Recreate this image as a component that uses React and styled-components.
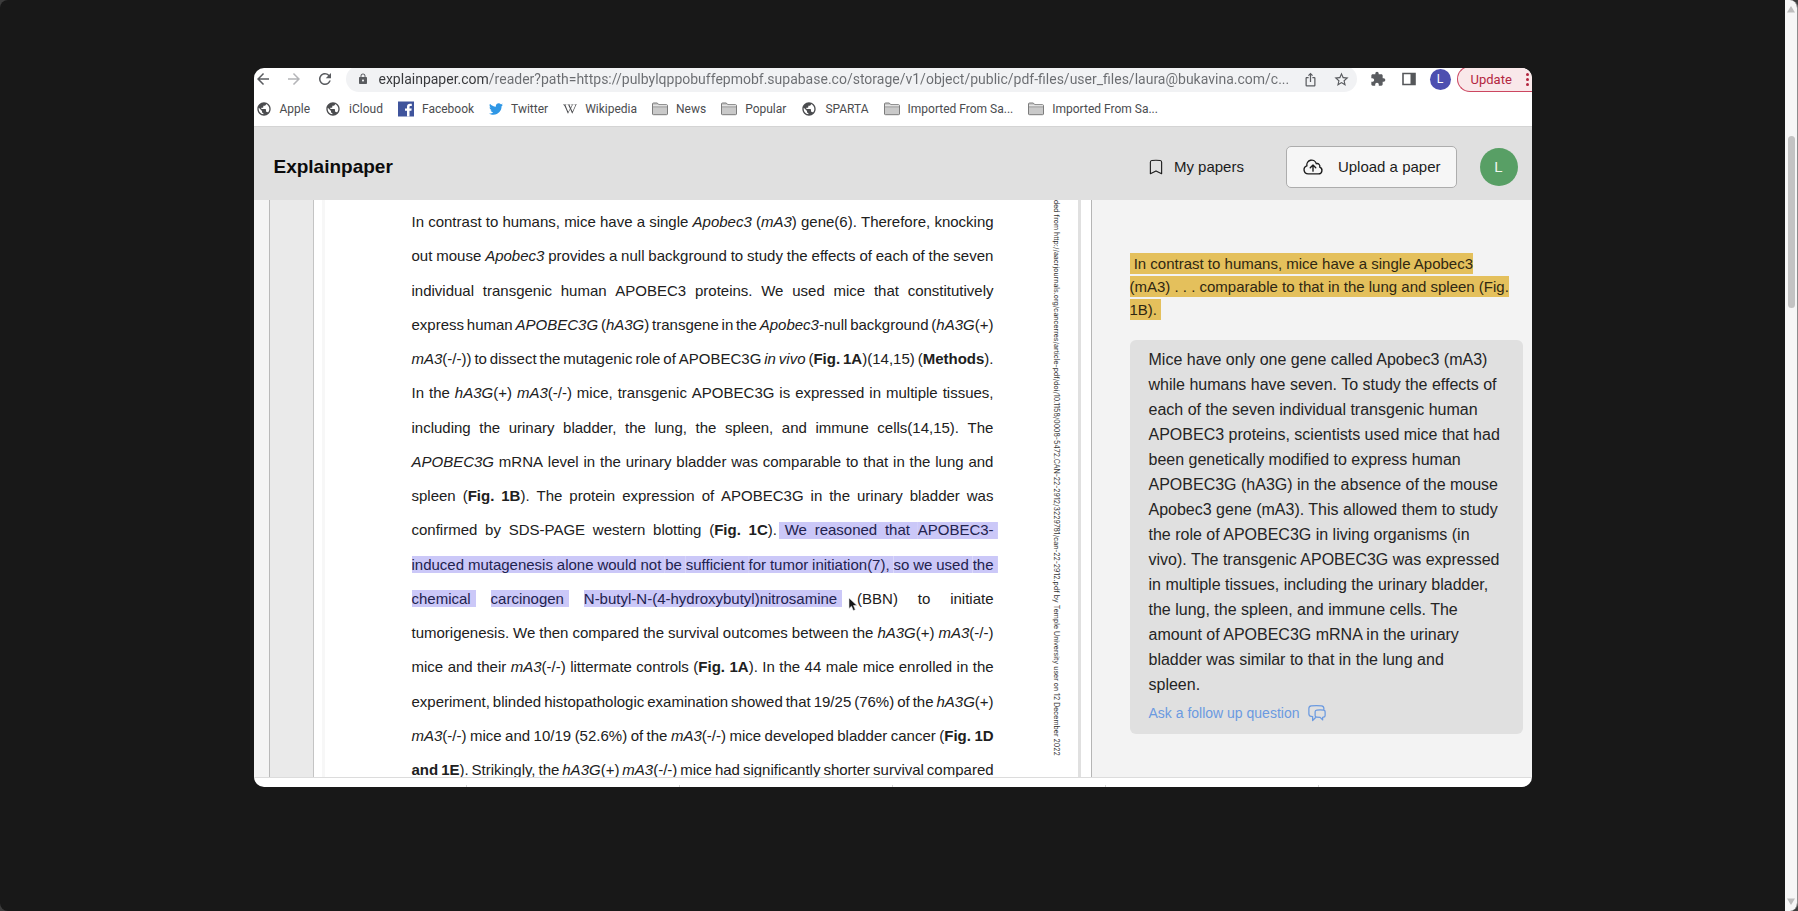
import styled, { createGlobalStyle, css } from "styled-components";
import {
  MdArrowBack,
  MdArrowForward,
  MdRefresh,
  MdLock,
  MdIosShare,
  MdStarBorder,
  MdExtension,
  MdPublic,
} from "react-icons/md";
import { FaTwitter, FaWikipediaW } from "react-icons/fa";
import {
  HiOutlineBookmark,
  HiOutlineCloudArrowUp,
  HiOutlineChatBubbleLeftRight,
} from "react-icons/hi2";

const GlobalStyle = createGlobalStyle`
  * {
    box-sizing: border-box;
  }

  body {
    margin: 0;
    background: #3c3c3c;
    font-family: "Liberation Sans", Arial, sans-serif;
  }

  button,
  input {
    font: inherit;
  }
`;

const Page = styled.div`
  display: flex;
  height: 100vh;
  overflow: hidden;
  background: #181818;
  border-right: 1px solid #8c8c8c;
  border-radius: 8px;
`;

const Stage = styled.main`
  flex: 1;
  min-width: 0;
  display: flex;
  justify-content: center;
  padding: 68px 24px 124px;
`;

const ScrollTrack = styled.div`
  width: 12px;
  display: flex;
  flex-direction: column;
  align-items: center;
  justify-content: space-between;
  padding: 6px 0;
  background: #f6f6f6;
`;

const ScrollRail = styled.div`
  flex: 1;
  padding-top: 123px;
`;

const ScrollThumb = styled.div`
  width: 7px;
  height: 172px;
  border-radius: 4px;
  background: #c3c3c3;
`;

const Window = styled.section`
  width: 100%;
  max-width: 1278px;
  display: flex;
  flex-direction: column;
  overflow: hidden;
  border-radius: 10px;
  background: #fff;
`;

const Toolbar = styled.div`
  flex: none;
  display: flex;
  align-items: flex-end;
  height: 24px;
  color: #5a5c60;
`;

const IconButton = styled.button`
  display: flex;
  align-items: center;
  justify-content: center;
  flex: none;
  width: ${(props) => props.$width || 31}px;
  height: 26px;
  padding: 0;
  border: none;
  background: none;
  color: ${(props) => (props.$muted ? "#b4b5b8" : "inherit")};
  cursor: pointer;
`;

const NavButtons = styled.div`
  display: flex;
  gap: 13px;
  padding-right: 12px;
`;

const AddressBar = styled.label`
  flex: 1;
  min-width: 0;
  display: flex;
  align-items: center;
  height: 26px;
  padding-left: 11px;
  border-radius: 13px;
  background: #f1f2f4;
`;

const AddressInput = styled.input`
  flex: 1;
  min-width: 0;
  margin-left: 10px;
  padding: 0;
  border: none;
  outline: none;
  font-family: Roboto, sans-serif;
  font-size: 14px;
  line-height: 20px;
  color: transparent;
  background: linear-gradient(90deg, #36373a 110px, #6a6c70 110px);
  background-clip: text;
`;

const Extensions = styled.div`
  display: flex;
  padding: 0 1px 0 6px;
`;

const ProfileBadge = styled.span`
  display: flex;
  align-items: center;
  justify-content: center;
  width: 21px;
  height: 21px;
  border-radius: 50%;
  background: #4d4fb0;
  color: #fff;
  font-size: 12px;
`;

const UpdateButton = styled.button`
  flex: none;
  display: flex;
  align-items: center;
  gap: 14px;
  width: 75px;
  height: 26px;
  padding: 0 0 0 13px;
  border: 1px solid #cc4660;
  border-right: none;
  border-radius: 13px 0 0 13px;
  background: #f9e8ea;
  color: #b3263f;
  font-family: Roboto, sans-serif;
  font-size: 13px;
`;

const Bookmarks = styled.nav`
  flex: none;
  display: flex;
  align-items: center;
  gap: 15px;
  height: 35px;
  padding-left: 2px;
  border-bottom: 1px solid #d4d4d4;
`;

const BookmarkLink = styled.a`
  display: flex;
  align-items: center;
  gap: 8px;
  color: #4b4c4f;
  font-family: Roboto, sans-serif;
  font-size: 12px;
  line-height: 16px;
  white-space: nowrap;
  text-decoration: none;
`;

const Header = styled.header`
  flex: none;
  display: flex;
  align-items: center;
  height: 73px;
  padding: 6px 14px 0 20px;
  background: #e0e0e0;
`;

const Brand = styled.h1`
  flex: 1;
  margin: 0;
  font-size: 19px;
  line-height: 24px;
  color: #0c0c0c;
`;

const PapersLink = styled.a`
  display: flex;
  align-items: center;
  gap: 9px;
  margin-right: 42px;
  color: #1c1c1c;
  font-size: 15px;
  text-decoration: none;
`;

const UploadButton = styled.button`
  display: flex;
  align-items: center;
  gap: 14px;
  height: 42px;
  margin-right: 23px;
  padding: 0 15px;
  border: 1px solid #adadad;
  border-radius: 5px;
  background: #f6f6f6;
  color: #1c1c1c;
  font-size: 15px;
  cursor: pointer;
`;

const Avatar = styled.button`
  width: 38px;
  height: 38px;
  padding: 0;
  border: none;
  border-radius: 50%;
  background: #589f65;
  color: #f2f7f2;
  font-size: 15px;
`;

const Reader = styled.div`
  flex: 1;
  min-height: 0;
  display: flex;
  overflow: hidden;
`;

const Gutter = styled.div`
  flex: none;
  width: 16px;
  background: #f4f4f4;
  border-right: 1px solid #b9b9b9;
`;

const Margin = styled.div`
  flex: none;
  width: 44px;
  background: #eaeaea;
  border-right: 1px solid #c4c4c4;
`;

const Paper = styled.article`
  flex: 1;
  min-width: 0;
  display: flex;
  align-items: flex-start;
  margin-left: 8px;
  border-left: 3px solid #f7f7f7;
  border-right: 3px solid #e0e0e0;
`;

const PaperText = styled.div`
  flex: 1;
  min-width: 0;
  display: flex;
  flex-direction: column;
  justify-content: space-between;
  height: 582px;
  margin: 5px 58px 0 87px;
  color: #202020;
  font-size: 15px;
  line-height: 34px;
`;

const Line = styled.div`
  display: flex;
  white-space: nowrap;
`;

// Spare width goes to every word but the last, which justifies the line.
const Word = styled.span`
  position: relative;
  flex: 1 0 auto;

  &:last-child {
    flex-grow: 0;
  }

  ${(props) =>
    props.$marked &&
    css`
      background: linear-gradient(#cbc8f8, #cbc8f8) center / 100% 17px no-repeat;
      color: #22224e;
    `}

  ${(props) =>
    props.$first &&
    css`
      margin-left: -6px;
      padding-left: 6px;
    `}

  ${(props) =>
    props.$marked &&
    css`
      &:last-child {
        margin-right: -4px;
        padding-right: 4px;
      }
    `}
`;

const Mark = styled.mark`
  margin-right: -5px;
  padding-right: 5px;
  background: #cbc8f8;
  color: #22224e;
`;

const Pointer = styled.svg`
  position: absolute;
  top: 15px;
  left: -9px;
`;

const SideNote = styled.p`
  flex: none;
  margin: 0 17px 0 0;
  writing-mode: vertical-rl;
  color: #333;
  font-family: Inter, sans-serif;
  font-size: 7px;
  line-height: 9px;
  white-space: nowrap;
`;

const Panel = styled.aside`
  flex: 0 0 441px;
  margin-left: 10px;
  padding: 52px 9px 0 38px;
  border-left: 1px solid #b5b5b5;
  background: #f3f3f3;
`;

const Quote = styled.p`
  margin: 0;
  color: #2f2712;
  font-size: 15px;
  line-height: 23px;
  white-space: nowrap;
`;

const QuoteLine = styled.span`
  display: table;
  height: 21px;
  margin: 1px 0 2px;
  background: #e4c05c;
  line-height: 21px;
`;

const Answer = styled.div`
  margin-top: 20px;
  padding: 7px 16px 9px 19px;
  border-radius: 6px;
  background: #e0e0e0;
`;

const AnswerText = styled.p`
  margin: 0;
  color: #242424;
  font-size: 16px;
  line-height: 25px;
`;

const AnswerLine = styled.span`
  display: block;
  white-space: nowrap;
`;

const FollowUp = styled.a`
  display: flex;
  align-items: center;
  gap: 8px;
  margin-top: 4px;
  color: #6b9ae0;
  font-size: 14px;
  line-height: 24px;
  text-decoration: none;
`;

const Strip = styled.footer`
  flex: none;
  display: flex;
  align-items: flex-end;
  height: 10px;
  border-top: 1px solid #dcdcdc;
`;

const Tick = styled.i`
  flex: 1;
  height: 2px;
  border-right: 1px solid #d8d8d8;

  &:last-child {
    border-right: none;
  }
`;

const Folder = () => (
  <svg width="16" height="14" viewBox="0 0 16 14" aria-hidden="true">
    <path
      d="M.5 12V2q0-1 1-1h3.8l1.6 1.7h7.6q1 0 1 1V12q0 .7-1 .7h-13q-1 0-1-.7z"
      fill="#c9c9c9"
      stroke="#7c7c7c"
    />
    <path d="M1 4.8h14" stroke="#8c8c8c" />
    <path d="M1 3.8h14" stroke="#efefef" />
  </svg>
);

const Facebook = () => (
  <svg width="16" height="16" viewBox="0 0 16 16" aria-hidden="true">
    <path d="M0 .5h16v15H0z" fill="#3f549c" />
    <path
      d="M9 15.5V9.8H7V7.4h2V5.8C9 3.8 10.1 2.7 12 2.7h1.8v2.3h-1.2c-.8 0-1.1.4-1.1 1.1v1.3h2.2l-.3 2.4h-1.9v5.7z"
      fill="#fff"
    />
  </svg>
);

const SidePanel = () => (
  <svg width="14" height="14" viewBox="0 0 14 14" aria-hidden="true">
    <path d="M1 1.5h12v11H1z" fill="none" stroke="#55575a" strokeWidth="1.6" />
    <path d="M8.5 1.5H13v11H8.5z" fill="#55575a" />
  </svg>
);

const Arrow = ({ down }) => (
  <svg width="8" height="7" viewBox="0 0 8 7" aria-hidden="true">
    <path d={down ? "M0 .5h8L4 7z" : "M0 6.5h8L4 0z"} fill="#bdbdbd" />
  </svg>
);

const bookmarks = [
  { label: "Apple", icon: <MdPublic size={16} /> },
  { label: "iCloud", icon: <MdPublic size={16} /> },
  { label: "Facebook", icon: <Facebook /> },
  { label: "Twitter", icon: <FaTwitter size={14} color="#2f97e5" /> },
  { label: "Wikipedia", icon: <FaWikipediaW size={14} /> },
  { label: "News", icon: <Folder /> },
  { label: "Popular", icon: <Folder /> },
  { label: "SPARTA", icon: <MdPublic size={16} /> },
  { label: "Imported From Sa...", icon: <Folder /> },
  { label: "Imported From Sa...", icon: <Folder /> },
];

// _word_ is italic, *word* is bold. `mark` is the range of selected words.
const paperLines = [
  { text: "In contrast to humans, mice have a single _Apobec3_ (_mA3_) gene(6). Therefore, knocking" },
  { text: "out mouse _Apobec3_ provides a null background to study the effects of each of the seven" },
  { text: "individual transgenic human APOBEC3 proteins. We used mice that constitutively" },
  { text: "express human _APOBEC3G_ (_hA3G_) transgene in the _Apobec3_-null background (_hA3G_(+)" },
  { text: "_mA3_(-/-)) to dissect the mutagenic role of APOBEC3G _in_ _vivo_ (*Fig.* *1A*)(14,15) (*Methods*)." },
  { text: "In the _hA3G_(+) _mA3_(-/-) mice, transgenic APOBEC3G is expressed in multiple tissues," },
  { text: "including the urinary bladder, the lung, the spleen, and immune cells(14,15). The" },
  { text: "_APOBEC3G_ mRNA level in the urinary bladder was comparable to that in the lung and" },
  { text: "spleen (*Fig.* *1B*). The protein expression of APOBEC3G in the urinary bladder was" },
  { text: "confirmed by SDS-PAGE western blotting (*Fig.* *1C*). We reasoned that APOBEC3-", mark: [7, 10] },
  { text: "induced mutagenesis alone would not be sufficient for tumor initiation(7), so we used the", mark: [0, 13] },
  { text: "chemical carcinogen N-butyl-N-(4-hydroxybutyl)nitrosamine (BBN) to initiate", mark: [0, 2], split: true, pointer: 3 },
  { text: "tumorigenesis. We then compared the survival outcomes between the _hA3G_(+) _mA3_(-/-)" },
  { text: "mice and their _mA3_(-/-) littermate controls (*Fig.* *1A*). In the 44 male mice enrolled in the" },
  { text: "experiment, blinded histopathologic examination showed that 19/25 (76%) of the _hA3G_(+)" },
  { text: "_mA3_(-/-) mice and 10/19 (52.6%) of the _mA3_(-/-) mice developed bladder cancer (*Fig.* *1D*" },
  { text: "*and* *1E*). Strikingly, the _hA3G_(+) _mA3_(-/-) mice had significantly shorter survival compared" },
];

const answerLines = [
  "Mice have only one gene called Apobec3 (mA3)",
  "while humans have seven. To study the effects of",
  "each of the seven individual transgenic human",
  "APOBEC3 proteins, scientists used mice that had",
  "been genetically modified to express human",
  "APOBEC3G (hA3G) in the absence of the mouse",
  "Apobec3 gene (mA3). This allowed them to study",
  "the role of APOBEC3G in living organisms (in",
  "vivo). The transgenic APOBEC3G was expressed",
  "in multiple tissues, including the urinary bladder,",
  "the lung, the spleen, and immune cells. The",
  "amount of APOBEC3G mRNA in the urinary",
  "bladder was similar to that in the lung and",
  "spleen.",
];

const format = (word) =>
  word.split(/(_[^_]+_|\*[^*]+\*)/).map((part, i) => {
    if (part[0] === "_") return <em key={i}>{part.slice(1, -1)}</em>;
    if (part[0] === "*") return <b key={i}>{part.slice(1, -1)}</b>;
    return part;
  });

const PaperLine = ({ text, mark, split, pointer }) => (
  <Line>
    {text.split(" ").map((word, i) => {
      const marked = Boolean(mark) && i >= mark[0] && i <= mark[1];
      return [
        i > 0 && " ",
        <Word
          key={i}
          $marked={marked && !split}
          $first={marked && i > 0 && i === mark[0]}
        >
          {marked && split ? <Mark>{word}</Mark> : format(word)}
          {pointer === i && (
            <Pointer width="10" height="15" viewBox="0 0 10 15" aria-hidden="true">
              <path
                d="M1 1v10.5l2.5-2.3 1.8 4.3 2-.8-1.8-4.2H9z"
                fill="#161616"
                stroke="#e8e8e8"
                strokeWidth=".6"
              />
            </Pointer>
          )}
        </Word>,
      ];
    })}
  </Line>
);

const App = () => {
  return (
    <>
      <GlobalStyle />
      <Page>
        <Stage>
          <Window>
            <Toolbar>
              <NavButtons>
                <IconButton $width={18} aria-label="Back">
                  <MdArrowBack size={18} />
                </IconButton>
                <IconButton $width={18} $muted aria-label="Forward">
                  <MdArrowForward size={18} />
                </IconButton>
                <IconButton $width={18} aria-label="Reload">
                  <MdRefresh size={18} />
                </IconButton>
              </NavButtons>
              <AddressBar>
                <MdLock size={12} />
                <AddressInput
                  aria-label="Address"
                  defaultValue="explainpaper.com/reader?path=https://pulbylqppobuffepmobf.supabase.co/storage/v1/object/public/pdf-files/user_files/laura@bukavina.com/c..."
                />
                <IconButton aria-label="Share">
                  <MdIosShare size={15} />
                </IconButton>
                <IconButton aria-label="Bookmark this page">
                  <MdStarBorder size={17} />
                </IconButton>
              </AddressBar>
              <Extensions>
                <IconButton aria-label="Extensions">
                  <MdExtension size={16} />
                </IconButton>
                <IconButton aria-label="Side panel">
                  <SidePanel />
                </IconButton>
                <IconButton aria-label="Profile">
                  <ProfileBadge>L</ProfileBadge>
                </IconButton>
              </Extensions>
              <UpdateButton>
                Update
                <svg width="3" height="13" viewBox="0 0 3 13" aria-hidden="true">
                  <circle cx="1.5" cy="1.5" r="1.5" fill="currentColor" />
                  <circle cx="1.5" cy="6.5" r="1.5" fill="currentColor" />
                  <circle cx="1.5" cy="11.5" r="1.5" fill="currentColor" />
                </svg>
              </UpdateButton>
            </Toolbar>
            <Bookmarks>
              {bookmarks.map((item, i) => (
                <BookmarkLink href="#" key={i}>
                  {item.icon}
                  {item.label}
                </BookmarkLink>
              ))}
            </Bookmarks>
            <Header>
              <Brand>Explainpaper</Brand>
              <PapersLink href="#">
                <HiOutlineBookmark size={18} />
                My papers
              </PapersLink>
              <UploadButton>
                <HiOutlineCloudArrowUp size={22} />
                Upload a paper
              </UploadButton>
              <Avatar>L</Avatar>
            </Header>
            <Reader>
              <Gutter />
              <Margin />
              <Paper>
                <PaperText>
                  {paperLines.map((line, i) => (
                    <PaperLine key={i} {...line} />
                  ))}
                </PaperText>
                <SideNote>
                  ded from
                  http://aacrjournals.org/cancerres/article-pdf/doi/10.1158/0008-5472.CAN-22-2912/3229781/can-22-2912.pdf
                  by Temple University user on 12 December 2022
                </SideNote>
              </Paper>
              <Panel>
                <Quote>
                  <QuoteLine>
                    &nbsp;In contrast to humans, mice have a single Apobec3
                  </QuoteLine>
                  <QuoteLine>
                    (mA3) . . . comparable to that in the lung and spleen (Fig.
                  </QuoteLine>
                  <QuoteLine>1B).&nbsp;</QuoteLine>
                </Quote>
                <Answer>
                  <AnswerText>
                    {answerLines.map((line) => (
                      <AnswerLine key={line}>{line} </AnswerLine>
                    ))}
                  </AnswerText>
                  <FollowUp href="#">
                    Ask a follow up question
                    <HiOutlineChatBubbleLeftRight size={20} />
                  </FollowUp>
                </Answer>
              </Panel>
            </Reader>
            <Strip>
              <Tick />
              <Tick />
              <Tick />
              <Tick />
              <Tick />
              <Tick />
            </Strip>
          </Window>
        </Stage>
        <ScrollTrack>
          <Arrow />
          <ScrollRail>
            <ScrollThumb />
          </ScrollRail>
          <Arrow down />
        </ScrollTrack>
      </Page>
    </>
  );
};

export default App;
